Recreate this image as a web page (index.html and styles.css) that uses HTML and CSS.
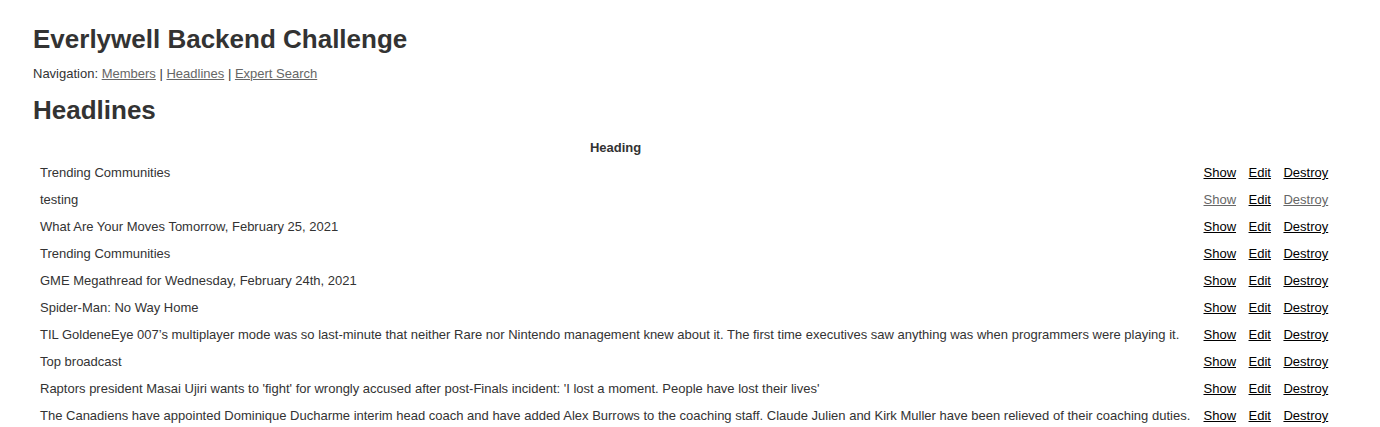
FILE: index.html
```
<!DOCTYPE html>
<html>
<head>
<meta charset="utf-8">
<title>Everlywell Backend Challenge</title>
<link rel="stylesheet" href="styles.css">
</head>
<body>
<h1 class="title">Everlywell Backend Challenge</h1>
<div class="nav">Navigation: <a class="visited" href="#">Members</a> | <a class="visited" href="#">Headlines</a> | <a class="visited" href="#">Expert Search</a></div>
<h1 class="page-title">Headlines</h1>
<table class="list">
  <thead>
    <tr><th>Heading</th><th colspan="3"></th></tr>
  </thead>
  <tbody>
    <tr><td class="head">Trending Communities</td><td class="act"><a href="#">Show</a></td><td class="act"><a href="#">Edit</a></td><td class="act"><a href="#">Destroy</a></td></tr>
    <tr><td class="head">testing</td><td class="act"><a class="visited" href="#">Show</a></td><td class="act"><a href="#">Edit</a></td><td class="act"><a class="visited" href="#">Destroy</a></td></tr>
    <tr><td class="head">What Are Your Moves Tomorrow, February 25, 2021</td><td class="act"><a href="#">Show</a></td><td class="act"><a href="#">Edit</a></td><td class="act"><a href="#">Destroy</a></td></tr>
    <tr><td class="head">Trending Communities</td><td class="act"><a href="#">Show</a></td><td class="act"><a href="#">Edit</a></td><td class="act"><a href="#">Destroy</a></td></tr>
    <tr><td class="head">GME Megathread for Wednesday, February 24th, 2021</td><td class="act"><a href="#">Show</a></td><td class="act"><a href="#">Edit</a></td><td class="act"><a href="#">Destroy</a></td></tr>
    <tr><td class="head">Spider-Man: No Way Home</td><td class="act"><a href="#">Show</a></td><td class="act"><a href="#">Edit</a></td><td class="act"><a href="#">Destroy</a></td></tr>
    <tr><td class="head">TIL GoldeneEye 007’s multiplayer mode was so last-minute that neither Rare nor Nintendo management knew about it. The first time executives saw anything was when programmers were playing it.</td><td class="act"><a href="#">Show</a></td><td class="act"><a href="#">Edit</a></td><td class="act"><a href="#">Destroy</a></td></tr>
    <tr><td class="head">Top broadcast</td><td class="act"><a href="#">Show</a></td><td class="act"><a href="#">Edit</a></td><td class="act"><a href="#">Destroy</a></td></tr>
    <tr><td class="head">Raptors president Masai Ujiri wants to 'fight' for wrongly accused after post-Finals incident: 'I lost a moment. People have lost their lives'</td><td class="act"><a href="#">Show</a></td><td class="act"><a href="#">Edit</a></td><td class="act"><a href="#">Destroy</a></td></tr>
    <tr><td class="head">The Canadiens have appointed Dominique Ducharme interim head coach and have added Alex Burrows to the coaching staff. Claude Julien and Kirk Muller have been relieved of their coaching duties.</td><td class="act"><a href="#">Show</a></td><td class="act"><a href="#">Edit</a></td><td class="act"><a href="#">Destroy</a></td></tr>
  </tbody>
</table>
</body>
</html>
```

FILE: styles.css
```
body {
  background-color: #fff;
  color: #333;
  margin: 0 33px 33px;
  padding-top: 30px;
  font-family: "Liberation Sans", Arial, sans-serif;
  font-size: 13px;
  line-height: 18px;
}
h1 {
  font-size: 26px;
  margin: 17px 0;
}
.title {
  margin-top: 0;
}
.page-title {
  margin-top: 18px;
}
.nav {
  margin: 13px 0;
}
a {
  color: #000;
}
a.visited {
  color: #666;
}
th {
  padding-bottom: 5px;
}
td {
  padding: 0 5px 7px;
  white-space: nowrap;
}
td.head {
  padding-right: 6px;
}
td.act {
  padding: 0 5.25px 7px;
}
```
